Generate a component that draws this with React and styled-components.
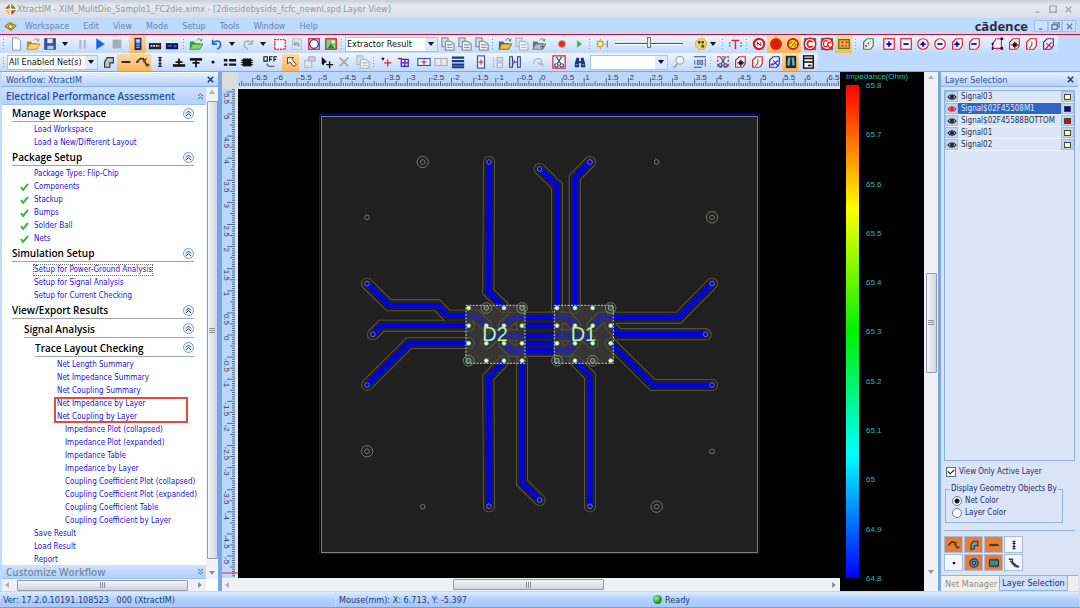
import React from 'react'
import styled, { createGlobalStyle, css } from 'styled-components'

const menus = ['Workspace', 'Edit', 'View', 'Mode', 'Setup', 'Tools', 'Window', 'Help']

const workflow = [
  { title: 'Manage Workspace', links: [ ['Load Workspace'], ['Load a New/Different Layout'] ] },
  { title: 'Package Setup', links: [
    ['Package Type: Flip-Chip'], ['Components', 'done'], ['Stackup', 'done'],
    ['Bumps', 'done'], ['Solder Ball', 'done'], ['Nets', 'done'],
  ] },
  { title: 'Simulation Setup', links: [
    ['Setup for Power-Ground Analysis', 'focus'], ['Setup for Signal Analysis'], ['Setup for Current Checking'],
  ] },
  { title: 'View/Export Results', links: [] },
]

const netSummaries = ['Net Length Summary', 'Net Impedance Summary', 'Net Coupling Summary']
const netByLayer = ['Net Impedance by Layer', 'Net Coupling by Layer']
const plots = [
  'Impedance Plot (collapsed)', 'Impedance Plot (expanded)', 'Impedance Table', 'Impedance by Layer',
  'Coupling Coefficient Plot (collapsed)', 'Coupling Coefficient Plot (expanded)',
  'Coupling Coefficient Table', 'Coupling Coefficient by Layer',
]
const results = ['Save Result', 'Load Result', 'Report']

const layers = [
  { name: 'Signal03', color: '#ffff99' },
  { name: 'Signal$02F45508M1', color: '#0000d8', selected: true },
  { name: 'Signal$02F45588BOTTOM', color: '#e00000' },
  { name: 'Signal01', color: '#ffff99' },
  { name: 'Signal02', color: '#ffff99' },
]

const impedances = ['65.8', '65.7', '65.6', '65.5', '65.4', '65.3', '65.2', '65.1', '65', '64.9', '64.8']

const traces = [
  '417,66 415,455 462,502',
  '569,87 621,138 621,504',
  '720,66 674,113 674,504',
  '51,431 117,496 262,496 292,527 378,527 409,557',
  '69,583 95,557 356,557',
  '51,735 178,609 356,609',
  '1086,431 986,533 752,533 728,557',
  '1067,583 805,583 782,557',
  '1086,735 908,735 782,610',
  '417,1099 415,712 462,662',
  '569,1080 516,1028 516,662',
  '720,1099 720,708 675,662',
  '462,557 487,533 654,533 675,557',
  '516,557 621,557',
  '409,610 434,586 704,586 728,610',
  '516,610 621,610',
  '462,610 485,632 655,632 675,610',
]
const dies = [
  { name: 'D2', x: 348, pads: [356, 409, 462, 516] },
  { name: 'D1', x: 613, pads: [621, 675, 728, 782] },
]
const padRows = [504, 557, 610, 662]
const ringed = ['409,504', '516,504', '782,504', '356,662', '621,662', '728,662']
const bigVias = [[218, 66], [1086, 232], [51, 934], [920, 1100]]
const smallVias = [[920, 66], [51, 232], [1086, 934], [218, 1100]]

// Icons, all on a 16 x 16 grid
const outline = 'M3 6L7 2H14V10L11 14H3Z'
const folder = (fill, edge) => <>
  <path d="M1 14V5H6L7 7H13V14Z" fill={edge}/>
  <path d="M1 14L4 8H16L12 14Z" fill={fill} stroke={edge}/>
  <path d="M9 4C10 1 13 1 14 4M14 5L12 3M14 5L15 2" stroke={edge} fill="none"/>
</>
const copies = color => <>
  <path d="M1 1H8V11H1Z" fill="#d9dfe8" stroke={color} strokeWidth="1.4"/>
  <path d="M5 5H11L15 8V15H5Z" fill="#eef1f6" stroke={color} strokeWidth="1.4"/>
  <path d="M7 9H13M7 12H13" stroke={color} strokeWidth="1.4"/>
</>
const sheet = (color, inner) => <>
  <path d={outline} fill="#f6f9ff" stroke={color} strokeWidth="1.4"/>
  {inner}
</>
const plus = <path d="M5 8H11M8 5V11" stroke="#0000e0" strokeWidth="2"/>
const minus = <path d="M5 8H11" stroke="#0000e0" strokeWidth="2"/>
const box = inner => <><rect x="2" y="2" width="12" height="12" fill="#f6f9ff" stroke="#e8202c" strokeWidth="1.4"/>{inner}</>
const ring = inner => <><circle cx="8" cy="8" r="6" fill="#f6f9ff" stroke="#e8202c" strokeWidth="1.4"/>{inner}</>
const move = <path d="M5 9H13M9 5V13M7 7L11 11M11 7L7 11" stroke="#111" strokeWidth="1.3"/>
const cross = <path d="M6 12L13 6M7 6L13 13" stroke="#1a2ad8" strokeWidth="1.2"/>
const scissors = <>
  <path d="M5 2L10 10M11 2L6 10" stroke="#2a4a80" strokeWidth="1.4"/>
  <circle cx="5" cy="12" r="2" fill="none" stroke="#2a4a80" strokeWidth="1.4"/>
  <circle cx="11" cy="12" r="2" fill="none" stroke="#2a4a80" strokeWidth="1.4"/>
</>

const icons = {
  new: <path d="M4 1H10L13 4V15H4Z" fill="#fff" stroke="#7d8da8"/>,
  open: folder('#ffd56a', '#c48a20'),
  save: <><rect x="2" y="2" width="12" height="12" fill="#3c50a8" stroke="#26367c"/><path d="M5 2H11V7H5Z" fill="#e8ecf8"/><path d="M5 10H12V14H5Z" fill="#b8c4e0"/></>,
  pause: <path d="M5 3V13M10 3V13" stroke="#b4bcc8" strokeWidth="2.6"/>,
  play: <path d="M4 2L13 8L4 14Z" fill="#1c5ce0" stroke="#4d86f0"/>,
  stop: <rect x="3" y="3" width="10" height="10" fill="#a8acb2"/>,
  stack: <><rect x="4" y="1" width="8" height="14" fill="#20356c"/><path d="M6 3H10V6H6ZM6 8H10M6 10H10M6 12H10" fill="#dfe6f6" stroke="#a8b8e0"/></>,
  chip: <><rect x="1" y="7" width="14" height="7" fill="#222"/><path d="M3 10H13" stroke="#ddd" strokeWidth="2" strokeDasharray="2 1"/></>,
  chipBlue: <><rect x="1" y="7" width="14" height="7" fill="#10184a"/><path d="M3 9H8V11H3ZM10 9H13V12H10Z" fill="#2b53ff"/></>,
  openGreen: folder('#8ed66c', '#3d9440'),
  undo: <path d="M3 3V8H8M3 8C6 3 13 4 12 9C12 11 10 13 8 14" fill="none" stroke="#2f6fd8" strokeWidth="2"/>,
  redo: <path d="M13 3V8H8M13 8C10 3 3 4 4 9C4 11 6 13 8 14" fill="none" stroke="#b0b8c4" strokeWidth="2"/>,
  marquee: <rect x="2" y="3" width="12" height="11" fill="#fff" stroke="#e8202c" strokeWidth="1.6" strokeDasharray="2 1"/>,
  revert: <><path d="M3 2H13V14H3Z" fill="#e0e3e8" stroke="#b4b9c2"/><path d="M5 5V9H9M5 9C8 5 11 7 10 11" fill="none" stroke="#9aa0aa" strokeWidth="1.5"/></>,
  fit: <><rect x="2" y="2" width="12" height="12" fill="#fff" stroke="#e8202c" strokeWidth="1.5"/><circle cx="8" cy="8" r="5" fill="none" stroke="#3038c8" strokeWidth="1.6"/></>,
  image: <><rect x="2" y="2" width="12" height="12" fill="#7ed07a" stroke="#e8202c" strokeWidth="1.5"/><path d="M4 13L8 7L12 13Z" fill="#1f8a30"/><path d="M9 4H12V7H9Z" fill="#fff"/></>,
  copies: copies('#8a94a4'),
  openPair: folder('#f2c14c', '#5d6b3c'),
  pasteGray: copies('#b4bac4'),
  exportGray: <>{folder('#b8bec6', '#687078')}<path d="M9 11H15M12 8V14" stroke="#5a6068"/></>,
  record: <circle cx="8" cy="8" r="4" fill="#d83018" stroke="#f09080"/>,
  playSmall: <path d="M6 4L11 8L6 12Z" fill="#3ba53c" stroke="#7ac878"/>,
  sun: <><circle cx="6" cy="8" r="3.2" fill="#fff4b0" stroke="#c49a20" strokeWidth="1.4"/><path d="M6 2V4M6 12V14M1 8H2M10 8H12M2 4L3 5M2 12L3 11" stroke="#c49a20"/><path d="M14 4V12" stroke="#555"/></>,
  palette: <><circle cx="8" cy="8" r="6.4" fill="#f4d75c" stroke="#cfae48"/><circle cx="6" cy="6" r="1.6" fill="#7a3a10"/><circle cx="10" cy="6" r="1.4" fill="#333"/><circle cx="10" cy="10.5" r="1.8" fill="#1c7c2c"/></>,
  text: <><path d="M4 4H13M8.500 4V14" stroke="#e8202c" strokeWidth="1.6"/><path d="M2 6V11M15 6V11" stroke="#38a048" strokeWidth="1.6" strokeDasharray="2 1"/></>,
  net: <><circle cx="8" cy="8" r="5.8" fill="#fff" stroke="#e01818" strokeWidth="2.6"/><path d="M6 10V6L10 10V6" stroke="#222" fill="none"/></>,
  netFull: <><circle cx="8" cy="8" r="6.8" fill="#e81c0c"/><path d="M10 6C6 4 5 7 8 8S10 12 6 10" stroke="#8c3a10" fill="none"/></>,
  netYellow: <><circle cx="8" cy="8" r="5.8" fill="#ffe818" stroke="#e01818" strokeWidth="2.2"/><path d="M4 8L7 5M6 11L11 5M9 11L12 8" stroke="#222"/></>,
  comp: <><path d="M1 1H15V15H1Z" fill="#4c7c80"/><circle cx="8" cy="8" r="6.6" fill="#fff" stroke="#e01818" strokeWidth="1.6"/><path d="M11 6C8 3 5 5 5 8S8 13 11 10" stroke="#e01818" strokeWidth="2" fill="none"/></>,
  compPair: <><path d="M1 1H15V15H1Z" fill="#4c7c80"/><circle cx="8" cy="8" r="6.6" fill="#fff" stroke="#e01818" strokeWidth="1.6"/><path d="M9 5C6 3 4 5 4 8S6 12 9 10M13 7C11 5 8 7 9 9S11 13 13 11" stroke="#e01818" strokeWidth="1.5" fill="none"/></>,
  board: <><rect x="2" y="3" width="12" height="10" fill="#f4b040" stroke="#3c7c28" strokeWidth="1.5"/><path d="M5 6H7M10 6H12M5 10H7M9 10H11" stroke="#c82020" strokeWidth="1.6"/></>,
  shapeGreen: sheet('#2a9438', <path d="M5 11L11 5" stroke="#e8202c" strokeWidth="2" strokeDasharray="2 2"/>),
  boxPlus: box(plus),
  boxMinus: box(minus),
  ringPlus: ring(plus),
  ringMinus: ring(minus),
  shapePlus: sheet('#e8202c', plus),
  shapeMinus: sheet('#e8202c', minus),
  points: <><path d="M3 13V8L7 2H13V13Z" fill="#f6f9ff" stroke="#e8202c" strokeWidth="1.4"/><path d="M2 13H4M12 13H15M12 2H15M2 8H4" stroke="#0000e0" strokeWidth="3"/></>,
  shapeMove: sheet('#e8202c', move),
  shapeEdit: sheet('#e8202c', <path d="M9 5V9L6 13" stroke="#409850" strokeWidth="1.5" fill="none"/>),
  shapeCut: sheet('#2038d8', <path d="M5 14L12 6M6 7L13 13" stroke="#e8202c" strokeWidth="1.5"/>),
  geometry: <path d="M3 14V8L6 3H13V9H9V14Z" fill="#c0c4ca" stroke="#333" strokeWidth="1.3"/>,
  dash: <path d="M3 8H13" stroke="#151515" strokeWidth="2"/>,
  wire: <><path d="M1 8L5 4H8L12 11H15" fill="none" stroke="#3a3020" strokeWidth="2"/><path d="M0 8H3M8 8L12 4M11 12H15" stroke="#6c4c20" strokeWidth="2"/></>,
  via: <path d="M8 3V13M6 3H10M6 13H10M6 6H10M6 10H10" stroke="#151515" strokeWidth="1.4"/>,
  ground: <><path d="M1 12H15" stroke="#151515" strokeWidth="3"/><path d="M8 4V11M4 8H12" stroke="#151515" strokeWidth="2"/></>,
  pin: <><path d="M1 5H15" stroke="#151515" strokeWidth="3"/><path d="M8 6V14M4 9H12" stroke="#151515" strokeWidth="2"/></>,
  dot: <circle cx="8" cy="8" r="1.8" fill="#151515"/>,
  rows: <path d="M1 6H5M7 6H15M1 11H5M7 11H15" stroke="#151515" strokeWidth="2.6"/>,
  package: <><rect x="3" y="4" width="10" height="9" fill="#111"/><path d="M1 6H15M1 8.500H15M1 11H15" stroke="#111"/></>,
  off: <><path d="M1 2H5V7H1ZM7.500 7.500V2H11M7.500 5H10M12.500 7.500V2H16M12.500 5H15" fill="none" stroke="#111" strokeWidth="1.200"/><path d="M4 10L7 13H13" stroke="#666" fill="none" strokeWidth="1.6"/></>,
  select: <path d="M4 3H11L9 5L14 11L11 13L7 8L4 10Z" fill="#fff" stroke="#4a3012"/>,
  pasteFlat: <><path d="M2 6H10V14H2Z" fill="#e4e7ec" stroke="#a8aeb8"/><path d="M6 2H14V7H6Z" fill="#c6cad2" stroke="#a8aeb8"/></>,
  moveTo: <><path d="M2 2L8 8L5 9L4 12L2 10Z" fill="#111"/><path d="M7 11H15M11 7V15" stroke="#111" strokeWidth="1.6"/></>,
  remove: <path d="M3 3L13 13M13 3L3 13" stroke="#a2a6ae" strokeWidth="1.8"/>,
  addPoint: <><path d="M6 9H14M10 5V13" stroke="#e8202c" strokeWidth="1.4"/><path d="M3 4H6M4.500 3V6" stroke="#111" strokeWidth="1.5"/></>,
  addGrid: <><path d="M6 5H14V13H6ZM6 9H14M10 5V13" stroke="#2030d8" strokeWidth="1.4" fill="none"/><path d="M2 4H7M10 7V11M8 9H12" stroke="#e8202c" strokeWidth="1.5"/></>,
  splitPlus: <><rect x="1" y="4" width="14" height="8" fill="#eaf1ff" stroke="#2a5ca8" strokeWidth="1.3"/><path d="M8 5V11M5 8H11" stroke="#e8202c" strokeWidth="1.3"/></>,
  splitGray: <><rect x="1" y="4" width="14" height="8" fill="#e6e9ee" stroke="#a8aeb8" strokeWidth="1.3"/><path d="M8 4V12" stroke="#a8aeb8"/></>,
  bars: <path d="M1 3H15M1 7H15M1 11H15M1 14H15" stroke="#173a84" strokeWidth="2.4"/>,
  tall: <><rect x="4" y="1" width="8" height="14" fill="#eaf1ff" stroke="#2a5ca8" strokeWidth="1.3"/><path d="M8 5V11M5 8H11" stroke="#e8202c" strokeWidth="1.2"/></>,
  tallGray: <><rect x="7" y="3" width="6" height="4" fill="#e6e9ee" stroke="#a0a6b0"/><rect x="7" y="9" width="6" height="5" fill="#e6e9ee" stroke="#a0a6b0"/><path d="M3 3V14" stroke="#a0a6b0" strokeDasharray="2 1"/></>,
  join: <><path d="M2 2H5V14H2ZM11 2H14V14H11Z" fill="#fff" stroke="#1c3c8c" strokeWidth="1.3"/><path d="M5 8H11" stroke="#18a0d8" strokeWidth="2"/><path d="M6 5L8 8L6 11" stroke="#e8202c" fill="none"/></>,
  rotate: <path d="M3 10C3 3 12 2 12 8L14 12M10 9L14 13M8 8L10 11" stroke="#b0b5bf" fill="none" strokeWidth="1.5"/>,
  cut: <><rect x="1" y="1" width="14" height="14" fill="#f8faff" stroke="#e8202c" strokeWidth="1.4"/>{scissors}</>,
  find: <><path d="M4 3H7V7H9V3H12L14 10V14H9V9H7V14H2V10Z" fill="#1d3a70"/><path d="M3 11H6M10 11H13" stroke="#8db0e8"/></>,
  lens: <><circle cx="9" cy="6" r="4.500" fill="#f2f5fa" stroke="#a2a8b2" strokeWidth="1.4"/><path d="M6 10L2 15" stroke="#a2a8b2" strokeWidth="2"/></>,
  measure: <><path d="M1 2H15M1 14H10" stroke="#2a4a90" strokeWidth="1.3"/><path d="M2 6V11M5 6H7V11H5ZM9 6H11V11H9Z" stroke="#2a4a90" fill="none"/><path d="M14 4V13" stroke="#2a4a90"/></>,
  trim: <><path d="M2 2H14V13H2Z" fill="none" stroke="#e8202c" strokeDasharray="3 2" strokeWidth="1.4"/>{scissors}</>,
  shapeCross: sheet('#2038d8', <>{cross}<path d="M4 12L7 9" stroke="#e8202c" strokeWidth="1.6"/></>),
  binocular: <><rect x="2" y="1" width="12" height="14" fill="#1c2c38"/><path d="M6 3L5 12M10 3L11 12" stroke="#78b0c0" strokeWidth="2.6"/></>,
  report: <><rect x="3" y="1" width="11" height="14" fill="#f4f6fa" stroke="#111" strokeWidth="1.6"/><path d="M3 4H14M3 8H14M8 12H12" stroke="#111" strokeWidth="1.5"/></>,
  padRing: <><circle cx="8" cy="8" r="5.500" fill="#38a4b8" stroke="#1b2c70" strokeWidth="1.6"/><circle cx="8" cy="8" r="2.400" fill="#f0862c" stroke="#1b2c70" strokeWidth="1.4"/></>,
  geomTeal: <path d="M4 14V7L7 3H13V9H9L8 13Z" fill="#58a8a8" stroke="#15324a" strokeWidth="1.4"/>,
  chipTeal: <><rect x="2" y="4" width="12" height="8" fill="#3c8c98" stroke="#15324a" strokeWidth="1.4"/><path d="M4 2V14M7 2V14M10 2V14M12 2V14" stroke="#15324a" strokeDasharray="2 8"/></>,
  dashTeal: <path d="M2 8H14" stroke="#27464c" strokeWidth="3"/>,
  lead: <path d="M1 3H6V7L11 11V13H15M3 5L9 12H14" stroke="#26464c" strokeWidth="1.8" fill="none"/>,
  appMark: <><path d="M8 0L16 8L8 16L0 8Z" fill="#fff"/><path d="M7 1V7H1Z" fill="#e84820"/><path d="M9 1L15 7H9Z" fill="#2c9c3c"/><path d="M1 9H7V15Z" fill="#f4b820"/><path d="M15 9H9V15Z" fill="#d83020"/></>,
  docMark: <><path d="M1 8L7 3L15 7L9 13Z" fill="#e8b418" stroke="#7a5c08"/><circle cx="8" cy="8" r="2.500" fill="#f8f0b0" stroke="#7a5c08"/></>,
}

const toolbarOne = [
  ['grip', 0], 'new', 'open', 'save', ['caret', 14],
  ['gap', 2], 'pause', 'play', 'stop',
  ['gap', 4], '*stack', 'chip', 'chipBlue',
  ['gap', 2], ['grip', 0], 'openGreen',
  ['gap', 4], 'undo', ['caret', 14], 'redo', ['caret', 14],
  ['gap', 1], 'marquee', 'revert', 'fit', 'image',
  ['gap', 1], ['grip', 0], ['combo', 93, 'Extractor Result'],
  ['gap', 1], 'copies', 'copies', 'copies',
  ['gap', 1], ['grip', 0], 'openPair', 'pasteGray', 'exportGray',
  ['gap', 6], 'record', 'playSmall',
  ['gap', 1], ['grip', 0], 'sun', ['slider', 78], ['gap', 4], 'palette', ['caret', 8],
  ['gap', 4], ['grip', 0], 'text',
  ['gap', 2], ['grip', 0], 'net', '*netFull', '*netYellow', 'comp', 'compPair', '*board',
  ['gap', 2], ['grip', 0], 'shapeGreen',
  ['gap', 4], 'boxPlus', 'boxMinus', 'ringPlus', 'ringMinus', 'shapePlus', 'shapeMinus',
  ['gap', 6], 'points', 'shapeMove', 'shapeEdit', 'shapeCut',
]
const toolbarTwo = [
  ['grip', 0], ['combo', 91, 'All Enabled Net(s)'],
  ['gap', 2], 'geometry', '*dash', '*wire', 'via', ['gap', 2], 'ground', 'pin', 'dot', 'rows', 'package',
  ['gap', 6], 'off', ['gap', 4], '*select', ['gap', 2], 'pasteFlat', 'moveTo', 'remove', ['gap', 2], 'pasteGray',
  ['gap', 1], ['grip', 0], 'addPoint', 'addGrid',
  ['gap', 4], 'splitPlus', 'splitGray', 'bars',
  ['gap', 6], 'tall', 'tallGray', 'join',
  ['gap', 6], 'rotate', ['gap', 4], 'cut', ['gap', 4], 'find',
  ['gap', 2], ['search', 78], ['gap', 2], 'lens', ['gap', 4], 'measure',
  ['gap', 1], ['grip', 0], 'trim', 'shapeMove', 'shapeEdit', 'shapeCross', '*binocular', 'report',
]

function Icon({ name, size = 14 }) {
  return <Svg width={size} height={size} viewBox="0 0 16 16" aria-hidden="true">{icons[name]}</Svg>
}

function Tool({ item }) {
  if (typeof item === 'string') {
    const active = item[0] === '*'
    const name = active ? item.slice(1) : item
    return <ToolButton $active={active} aria-label={name}><Icon name={name}/></ToolButton>
  }
  const [kind, width, label] = item
  if (kind === 'grip') return <Grip/>
  if (kind === 'gap') return <Gap $width={width}/>
  if (kind === 'caret') return <CaretButton $width={width} aria-label="More"><Arrow/></CaretButton>
  if (kind === 'slider') return <Slider type="range" min="0" max="100" defaultValue="50" aria-label="Brightness" $width={width}/>
  if (kind === 'search') return (
    <Combo $width={width}>
      <SearchBox type="text" aria-label="Find"/>
      <ComboArrow><Arrow/></ComboArrow>
    </Combo>
  )
  return (
    <Combo $width={width}>
      <ComboSelect aria-label={label} defaultValue={label}><option>{label}</option></ComboSelect>
      <ComboArrow><Arrow/></ComboArrow>
    </Combo>
  )
}

function Heading({ title, indent = 10, nested }) {
  return (
    <HeadingRow $indent={indent} $nested={nested}>
      {title}
      <RoundButton aria-label={'Collapse ' + title}>
        <svg width="7" height="7" viewBox="0 0 7 7"><path d="M1 3.500L3.500 1L6 3.500M1 6L3.500 3.500L6 6" fill="none" stroke="#2a4468"/></svg>
      </RoundButton>
    </HeadingRow>
  )
}

function Step({ label, indent = 32, state }) {
  return (
    <StepRow $indent={indent}>
      {state === 'done' && <CheckMark width="9" height="8" viewBox="0 0 9 8"><path d="M1 4L3 7L8 1" fill="none" stroke="#3cb84a" strokeWidth="2"/></CheckMark>}
      <StepLink href="#" $focus={state === 'focus'}>{label}</StepLink>
    </StepRow>
  )
}

function Chevrons({ down }) {
  return (
    <svg width="7" height="8" viewBox="0 0 7 8">
      <path d={down ? 'M1 1L3.500 3L6 1M1 4L3.500 6L6 4' : 'M1 4L3.500 2L6 4M1 7L3.500 5L6 7'} fill="none" stroke="#3c68ac"/>
    </svg>
  )
}

function Workflow() {
  return (
    <LeftPanel>
      <PanelTitle>Workflow: XtractIM<CloseButton aria-label="Close workflow"><WindowGlyph kind="close"/></CloseButton></PanelTitle>
      <WorkflowBody>
        <Steps>
          <Band>Electrical Performance Assessment<Chevrons/></Band>
          <StepList>
            {workflow.map( group =>
              <React.Fragment key={group.title}>
                <Heading title={group.title}/>
                {group.links.map( ([label, state]) => <Step key={label} label={label} state={state}/> )}
              </React.Fragment>
            )}
            <Heading title="Signal Analysis" indent={22} nested/>
            <Heading title="Trace Layout Checking" indent={33} nested/>
            {netSummaries.map( label => <Step key={label} label={label} indent={55}/> )}
            <Marked>
              {netByLayer.map( label => <Step key={label} label={label} indent={3}/> )}
            </Marked>
            {plots.map( label => <Step key={label} label={label} indent={63}/> )}
            {results.map( label => <Step key={label} label={label}/> )}
          </StepList>
          <Band $muted>Customize Workflow<Chevrons down/></Band>
        </Steps>
        <Scroll $vertical $before={0} $thumb={462} $after={6}/>
        <Scroll $before={1} $thumb={174} $after={4}/>
      </WorkflowBody>
    </LeftPanel>
  )
}

function Scroll({ $vertical, $before, $thumb, $after }) {
  const back = $vertical ? 'M1 5L4 1L7 5Z' : 'M5 1L1 4L5 7Z'
  const next = $vertical ? 'M1 2L4 6L7 2Z' : 'M2 1L6 4L2 7Z'
  return (
    <ScrollTrack $vertical={$vertical}>
      <svg width="8" height="8"><path d={back} fill="#a9aeb8"/></svg>
      <Space $grow={$before}/>
      <Thumb $vertical={$vertical} $grow={$thumb}><i/><i/><i/></Thumb>
      <Space $grow={$after}/>
      <svg width="8" height="8"><path d={next} fill="#8d939e"/></svg>
    </ScrollTrack>
  )
}

const SCALE = 44.2
const range = (from, to) => Array.from({ length: to - from + 1 }, (_, i) => from + i)
const ticksX = range(-136, 135)
const ticksY = range(-109, 111)

function tickLength(i) {
  if (i % 10 === 0) return 8
  if (i % 5 === 0) return 5
  return 3
}

function RulerX() {
  return (
    <RulerSvg viewBox="238 72 602 17" preserveAspectRatio="xMidYMid slice">
      <path d={ticksX.map( i => `M${540 + i * SCALE / 20} 86v-${tickLength(i)}` ).join('')} stroke="#3d5270" strokeWidth="0.8"/>
      {ticksX.filter( i => i % 10 === 0 ).map( i => <text key={i} x={541 + i * SCALE / 20} y="80">{i / 20}</text> )}
      <path d="M238 88H840" stroke="#e4e6ea" strokeWidth="3"/>
    </RulerSvg>
  )
}

function RulerY() {
  return (
    <RulerSvg viewBox="222 89 16 489" preserveAspectRatio="xMidYMid slice">
      <path d={ticksY.map( i => `M235 ${335 - i * SCALE / 20}h-${tickLength(i)}` ).join('')} stroke="#3d5270" strokeWidth="0.8"/>
      {ticksY.filter( i => i % 10 === 0 ).map( i => <text key={i} transform={`translate(224 ${336 - i * SCALE / 20}) rotate(90)`}>{i / 20}</text> )}
      <path d="M237 89V578" stroke="#e4e6ea" strokeWidth="3"/>
      <path d="M222 573H238" stroke="#e03030"/>
    </RulerSvg>
  )
}

function Board() {
  return (
    <BoardSvg viewBox="238 89 602 489">
      <rect x="319.5" y="114.5" width="440" height="439" fill="none" stroke="#0c0c9a"/>
      <rect x="321.5" y="116.5" width="436" height="436" fill="#202020" stroke="#7c7c84"/>
      <g transform="translate(350 140) scale(0.33333)" fill="none">
        <g stroke="#605e58" strokeWidth="36" strokeLinecap="round">
          {traces.map( t => <polyline key={t} points={t}/> )}
        </g>
        <g stroke="#202020" strokeWidth="31" strokeLinecap="round">
          {traces.map( t => <polyline key={t} points={t}/> )}
        </g>
        <g stroke="#0000ee" strokeWidth="14">
          {traces.map( t => <polyline key={t} points={t}/> )}
        </g>
        {traces.slice(0, 12).map( t => {
          const [x, y] = t.split(' ')[0].split(',')
          return <circle key={t} cx={x} cy={y} r="7" fill="#0000d0" stroke="#8484a0" strokeWidth="2.5"/>
        })}
        <g stroke="#86867e" strokeWidth="2.5">
          {bigVias.map( ([x, y]) => <g key={x}><circle cx={x} cy={y} r="17"/><circle cx={x} cy={y} r="7"/></g> )}
          {smallVias.map( ([x, y]) => <circle key={x} cx={x} cy={y} r="7"/> )}
        </g>
        {dies.map( die =>
          <g key={die.name}>
            <rect x={die.x} y="496" width="177" height="174" fill="#4c4a48" fillOpacity="0.5" stroke="#b4d8ac" strokeWidth="3" strokeDasharray="6 4"/>
            {die.pads.map( x => padRows.map( y => {
              const hasRing = ringed.includes(x + ',' + y)
              return (
                <g key={y}>
                  {hasRing && <circle cx={x} cy={y} r="16" stroke="#8a8a82" strokeWidth="2.5"/>}
                  <circle cx={x} cy={y} r={hasRing ? 7 : 6} fill={hasRing ? '#4a5048' : '#eaffdc'} stroke="#90c890" strokeWidth="2.5"/>
                </g>
              )
            }))}
            <DieName x={die.x + 49} y="604">{die.name}</DieName>
          </g>
        )}
      </g>
    </BoardSvg>
  )
}

function Layers() {
  return (
    <RightPanel>
      <PanelTitle>Layer Selection<CloseButton aria-label="Close layer selection"><WindowGlyph kind="close"/></CloseButton></PanelTitle>
      <LayerBody>
        <LayerList>
          {layers.map( layer =>
            <LayerRow key={layer.name} $selected={layer.selected}>
              <LayerToggle aria-label={'Show ' + layer.name}>
                <svg width="10" height="8" viewBox="0 0 10 8">
                  <path d="M1 4C3 1 7 1 9 4C7 7 3 7 1 4Z" fill="none" stroke={layer.selected ? '#e02020' : '#222'} strokeWidth="1.200"/>
                  <circle cx="5" cy="4" r="2" fill={layer.selected ? '#e02020' : '#222'}/>
                </svg>
              </LayerToggle>
              <LayerName>{layer.name}</LayerName>
              <LayerToggle aria-label={'Color of ' + layer.name}><Swatch $color={layer.color}/></LayerToggle>
            </LayerRow>
          )}
        </LayerList>
        <Option><Check type="checkbox" defaultChecked/>View Only Active Layer</Option>
        <Group>
          <legend>Display Geometry Objects By</legend>
          <Option><Radio type="radio" name="by" defaultChecked/>Net Color</Option>
          <Option><Radio type="radio" name="by"/>Layer Color</Option>
        </Group>
        <ShapeGrid>
          {['*wire', '*geomTeal', '*dashTeal', 'via', 'dot', '*padRing', '*chipTeal', 'lead'].map( item => {
            const name = item.replace('*', '')
            return <ShapeButton key={name} $active={item !== name} aria-label={name}><Icon name={name} size={12}/></ShapeButton>
          })}
        </ShapeGrid>
      </LayerBody>
      <Tabs>
        <Tab>Net Manager</Tab>
        <Tab $active>Layer Selection</Tab>
      </Tabs>
    </RightPanel>
  )
}

function WindowGlyph({ kind }) {
  const d = {
    min: 'M2 8H6',
    max: 'M1 1H8V8H1Z',
    restore: 'M3 3V1H9V6H7M1 3H7V8H1Z',
    close: 'M2 2L8 8M8 2L2 8',
  }[kind]
  return <svg width="9" height="9" viewBox="0 0 10 10"><path d={d} fill="none" stroke="currentColor" strokeWidth="1.600"/></svg>
}

export default function App() {
  return (
    <Frame>
      <GlobalStyle/>
      <TitleBar>
        <Icon name="appMark" size={13}/>
        <Title>XtractIM - XIM_MulitDie_Sample1_FC2die.ximx - [2diesidebyside_fcfc_newnl.spd Layer View]</Title>
        {['min', 'max', 'close'].map( k => <TitleButton key={k} aria-label={k}><WindowGlyph kind={k}/></TitleButton> )}
      </TitleBar>
      <MenuBar>
        <Icon name="docMark" size={13}/>
        <Menus>{menus.map( m => <MenuButton key={m}>{m}</MenuButton> )}</Menus>
        <Brand>cādence</Brand>
        {['min', 'restore', 'close'].map( k => <ChildButton key={k} aria-label={k + ' view'}><WindowGlyph kind={k}/></ChildButton> )}
      </MenuBar>
      <Toolbars>
        <Toolbar>{toolbarOne.map( (item, i) => <Tool key={i} item={item}/> )}</Toolbar>
        <Toolbar>{toolbarTwo.map( (item, i) => <Tool key={i} item={item}/> )}</Toolbar>
      </Toolbars>
      <Main>
        <Workflow/>
        <View>
          <Corner/>
          <RulerX/>
          <Legend>
            <div>Impedance(Ohm)</div>
            <Scale>
              <ScaleBar/>
              <ScaleLabels>{impedances.map( z => <span key={z}>{z}</span> )}</ScaleLabels>
            </Scale>
          </Legend>
          <ViewScrollY><Scroll $vertical $before={186} $thumb={98} $after={190}/></ViewScrollY>
          <RulerY/>
          <Board/>
          <ViewScrollX><Scroll $before={218} $thumb={149} $after={223}/></ViewScrollX>
        </View>
        <Layers/>
      </Main>
      <StatusBar>
        <Status>Ver: 17.2.0.10191.108523{'\u00a0\u00a0'} 000 (XtractIM)</Status>
        <Status>Mouse(mm): X: 6.713, Y: -5.397</Status>
        <Status><Lamp/>Ready</Status>
      </StatusBar>
    </Frame>
  )
}

// Styles
const GlobalStyle = createGlobalStyle`
  * { box-sizing:border-box; }
  body { margin:0; font:8px/10px "DejaVu Sans Condensed", "DejaVu Sans", sans-serif; color:#1c3c78; }
  button, input, select { font:inherit; color:inherit; margin:0; padding:0; border:0; background:none; }
  button { display:flex; align-items:center; justify-content:center; }
  svg { display:block; flex:none; }
`

const Frame = styled.div` display:flex; flex-direction:column; height:100vh; min-height:600px; background:#bfdaff; overflow:hidden; `

const Svg = styled.svg` flex:none; `

const TitleBar = styled.header`
  display:flex; align-items:center; height:18px; padding:0 4px; flex:none;
  background:linear-gradient(#c9cfd8, #e6eaf0 30%, #d8dee8);
  color:#9298a2;
`
const Title = styled.h1` flex:1; margin:0; font-size:9px; line-height:12px; font-weight:400; white-space:nowrap; `
const TitleButton = styled.button` width:15px; color:#a4aab4; `

const MenuBar = styled.nav`
  display:flex; align-items:center; height:17px; padding:0 4px; flex:none;
  background:#bfdaff; border-bottom:1px solid #c8102a;
`
const Menus = styled.div` display:flex; flex:1; gap:14px; margin-left:8px; `
const MenuButton = styled.button` font-size:9px; line-height:12px; color:#6984a8; `
const Brand = styled.div` margin-right:6px; font:700 13px/14px "Open Sans", sans-serif; color:#2c2c34; `
const ChildButton = styled.button` width:14px; height:12px; border:1px solid #a2c0ea; background:#cfe2fc; color:#6c80a0; `

const Toolbars = styled.div` flex:none; border-bottom:1px solid #7fa8e0; `
const Toolbar = styled.div`
  display:flex; align-items:center; width:max-content; height:18px; padding:0 2px;
  background:linear-gradient(#edf4ff, #d9e8fe 50%, #c3dafb);
`
const ToolButton = styled.button`
  flex:none; width:17px; height:17px;
  ${p => p.$active && css` background:linear-gradient(#ffd9a0, #fdb45c); `}
`
const Grip = styled.div` flex:none; width:5px; height:12px; background:radial-gradient(circle, #7d9cc8 1px, transparent 1px) 0 0 / 3px 3px repeat-y; `
const Gap = styled.div` flex:none; width:${p => p.$width}px; `
const CaretButton = styled.button` flex:none; width:${p => p.$width}px; height:17px; `
const Arrow = styled.span` border:3px solid transparent; border-top:4px solid #111; border-bottom:0; `
const Combo = styled.div` display:flex; flex:none; width:${p => p.$width}px; height:15px; border:1px solid #a8c4ec; background:#fff; color:#111; `
const ComboSelect = styled.select` flex:1; min-width:0; padding-left:1px; appearance:none; font-size:9px; `
const SearchBox = styled.input` flex:1; min-width:0; padding-left:2px; `
const ComboArrow = styled.span` display:flex; align-items:center; justify-content:center; width:12px; background:#dce9fc; pointer-events:none; `
const Slider = styled.input`
  flex:none; appearance:none; width:${p => p.$width}px; height:14px; padding:0 5px;
  &::-webkit-slider-runnable-track { height:2px; background:#555; border-bottom:1px solid #fff; }
  &::-webkit-slider-thumb { appearance:none; width:4px; height:11px; margin-top:-6px; background:#ece9d8; border:1px solid #777; }
`

const Main = styled.main` display:flex; flex:1; min-height:0; padding-bottom:1px; `

const PanelTitle = styled.h2`
  display:flex; align-items:center; justify-content:space-between; flex:none;
  height:14px; margin:1px 0 0; padding:0 3px 0 4px; border-bottom:1px solid #8cb2e8;
  background:linear-gradient(#e4effe, #b4d1fa); font-size:9px; line-height:12px; font-weight:400; color:#2c5290;
`
const CloseButton = styled.button` width:10px; height:10px; color:#123878; `

const LeftPanel = styled.aside` display:flex; flex-direction:column; flex:none; width:216px; margin-left:2px; background:#fff; `
const WorkflowBody = styled.div` display:grid; grid-template:minmax(0, 1fr) 12px / minmax(0, 1fr) 12px; flex:1; min-height:0; `
const Steps = styled.div` display:flex; flex-direction:column; min-height:0; `
const Band = styled.h3`
  display:flex; align-items:center; justify-content:space-between; flex:none;
  height:${p => p.$muted ? 14 : 18}px; margin:0; padding:0 2px 0 4px; border-bottom:1px solid #9cc0f2;
  background:linear-gradient(#cfe2fe, #b3d1fb); color:${p => p.$muted ? '#7888a0' : '#23529c'};
  font:600 10px/12px "Open Sans", sans-serif; white-space:nowrap;
`
const StepList = styled.div` flex:1; min-height:0; overflow:hidden; `
const HeadingRow = styled.h4`
  display:flex; align-items:center; justify-content:space-between;
  height:${p => p.$nested ? 18 : 17}px; margin:0 12px 1px ${p => p.$indent}px; border-bottom:1px solid #a0a4aa;
  font:600 10px/12px "Open Sans", sans-serif; color:#000;
`
const RoundButton = styled.button` width:11px; height:11px; border:1px solid #7f99bc; border-radius:50%; background:#eef4fc; `
const StepRow = styled.div` display:flex; align-items:center; height:13px; padding-left:${p => p.$indent}px; white-space:nowrap; `
const StepLink = styled.a`
  color:#1c14d8; text-decoration:none;
  ${p => p.$focus && css` outline:1px dotted #777; `}
`
const CheckMark = styled.svg` margin:0 5px 0 -14px; `
const Marked = styled.div` width:134px; margin-left:52px; outline:2px solid #e8483c; outline-offset:-2px; `

const ScrollTrack = styled.div`
  display:flex; align-items:center; gap:2px; min-width:0; min-height:0; width:100%; height:100%; padding:${p => p.$vertical ? '2px 0' : '0 2px'};
  flex-direction:${p => p.$vertical ? 'column' : 'row'}; background:#f0f1f4;
`
const Space = styled.div` flex:${p => p.$grow} 0 0; `
const Thumb = styled.div`
  display:flex; align-items:center; justify-content:center; gap:1px; flex:${p => p.$grow} 0 0;
  flex-direction:${p => p.$vertical ? 'column' : 'row'};
  ${p => p.$vertical ? css` width:11px; ` : css` height:11px; `}
  border:1px solid #949cac; border-radius:1px;
  background:linear-gradient(${p => p.$vertical ? '90deg' : '180deg'}, #f2f4f8, #cfd5e2);
  i { ${p => p.$vertical ? css` width:6px; height:1px; ` : css` width:1px; height:6px; `} background:#8a92a2; }
`

const View = styled.section`
  display:grid; grid-template:17px minmax(0, 1fr) 13px / 16px minmax(0, 1fr) 84px 14px;
  flex:1; min-width:0; border-left:4px solid #7ba6e4; background:#000;
`
const Corner = styled.div` background:#dcdcdc; `
const RulerSvg = styled.svg`
  width:100%; height:100%; min-height:0; background:#bcd7fc;
  text { font:8px "Liberation Sans", sans-serif; fill:#2c3e58; }
`
const Legend = styled.div`
  grid-row:1 / 4; grid-column:3; display:flex; flex-direction:column; padding:1px 0 13px 6px;
  font:8px/8px "Liberation Sans", sans-serif; color:#18c0b8;
`
const Scale = styled.div` display:flex; flex:1; gap:7px; margin-top:4px; `
const ScaleBar = styled.div` width:13px; background:linear-gradient(#ff0000, #ffff00 25%, #00f000 50%, #00ffff 75%, #0000ff); `
const ScaleLabels = styled.div` display:flex; flex-direction:column; justify-content:space-between; margin:-3px 0 -5px; `
const ViewScrollY = styled.div` grid-row:1 / 4; grid-column:4; min-height:0; padding-bottom:13px; background:#f0f1f4; `
const ViewScrollX = styled.div` grid-row:3; grid-column:1 / 3; `
const BoardSvg = styled.svg` grid-row:2; grid-column:2; width:100%; height:100%; min-height:0; `
const DieName = styled.text` font:60px "Liberation Sans", sans-serif; fill:#b4f4ac; `

const RightPanel = styled.aside` display:flex; flex-direction:column; flex:none; width:142px; padding-right:2px; border-left:3px solid #7ba6e4; background:#d9e5f6; `
const LayerBody = styled.div` display:flex; flex-direction:column; flex:1; min-height:0; padding:3px 3px 0; `
const LayerList = styled.ul` flex:1; margin:0 0 5px; padding:0; list-style:none; border:1px solid #90aede; background:#dbe6f7; `
const LayerRow = styled.li`
  display:grid; grid-template-columns:13px 1fr 13px; height:12px; border-bottom:1px solid #eaf1fb; color:#26344c;
  ${p => p.$selected && css` background:#2f66c4; color:#dfeaff; `}
`
const LayerName = styled.span` padding-left:3px; line-height:11px; `
const LayerToggle = styled.button` background:#bcd4f6; border:1px solid #9cbce8; `
const Swatch = styled.span` width:7px; height:6px; border:1px solid #444; background:${p => p.$color}; `
const Option = styled.label` display:flex; align-items:center; gap:3px; height:12px; margin-left:2px; color:#1c2c6c; white-space:nowrap; `
const Check = styled.input`
  appearance:none; width:10px; height:10px; border:1px solid #4c6c9c; background:#fff;
  &:checked::after { content:""; display:block; width:3px; height:5px; margin:0 0 0 2px; border:solid #111; border-width:0 1px 1px 0; transform:rotate(45deg); }
`
const Radio = styled.input`
  appearance:none; width:10px; height:10px; border:1px solid #5a7cb0; border-radius:50%; background:#fff;
  &:checked { background:radial-gradient(circle, #111 2px, #fff 3px); }
`
const Group = styled.fieldset`
  width:118px; margin:6px 0 0 1px; padding:1px 0 3px 4px; border:1px solid #94b2de;
  legend { padding:0 1px; color:#1c2c6c; }
`
const ShapeGrid = styled.div`
  display:grid; grid-template-columns:repeat(4, 19px); gap:1px; margin-top:7px; padding:5px 0 4px; border-top:1px solid #94b2de;
`
const ShapeButton = styled.button` height:17px; border:1px solid #a8bcd8; background:${p => p.$active ? '#f07c34' : '#f2f6fc'}; `
const Tabs = styled.div` display:flex; flex:none; height:16px; padding-left:2px; border-top:1px solid #94b2de; background:#f2f0ea; `
const Tab = styled.button`
  padding:0 2px; font-size:9px; line-height:12px; white-space:nowrap; color:#8c8c8c;
  ${p => p.$active && css` border:1px solid #94b2de; border-top:0; background:#cfe0fa; color:#1c2c7c; `}
`

const StatusBar = styled.footer`
  display:grid; grid-template-columns:336px 314px 1fr; flex:none; height:16px;
  border-bottom:1px solid #8a98ac; background:linear-gradient(#dcebff, #b2d1fc 50%, #a4c8fb);
  font-size:9px; line-height:14px; color:#1f3d70;
`
const Status = styled.div` display:flex; align-items:center; padding-left:3px; border-right:1px solid #c8dcf8; white-space:pre; `
const Lamp = styled.span` width:9px; height:9px; margin-right:3px; border-radius:50%; background:radial-gradient(circle at 35% 35%, #a4f08c, #189820 60%); `
